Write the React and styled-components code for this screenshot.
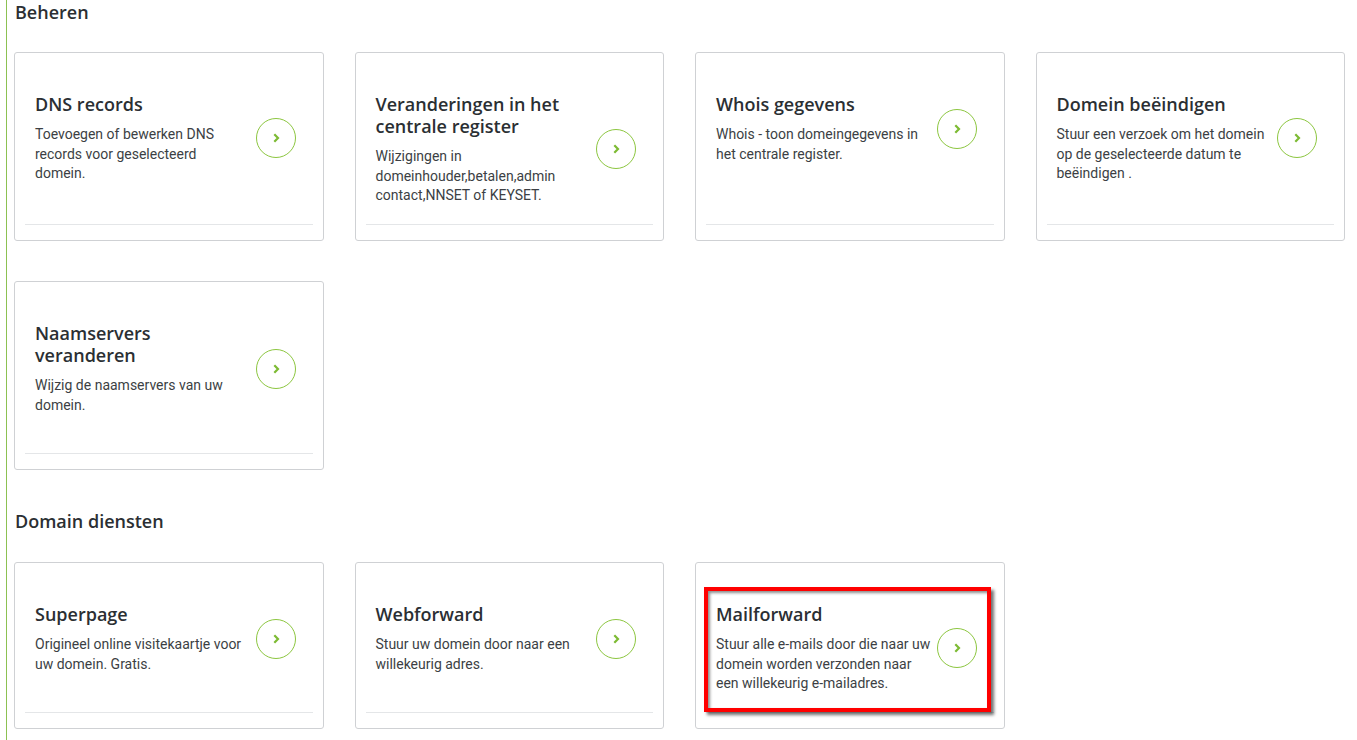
import React from "react";
import styled, { createGlobalStyle } from "styled-components";

const GlobalStyle = createGlobalStyle`
  body {
    margin: 0;
    background: #fff;
    font-family: Roboto, "Liberation Sans", sans-serif;
  }
`;

const Page = styled.div`
  margin-left: 6px;
  border-left: 1px solid #8cc152;
  padding: 0 12px 40px 7px;
  min-height: 740px;
  box-sizing: border-box;
`;

const SectionTitle = styled.h2`
  margin: 0;
  padding-top: ${(p) => p.$top}px;
  height: 24px;
  font-family: "Open Sans", "Noto Sans", sans-serif;
  font-weight: 600;
  font-size: 18px;
  line-height: 24px;
  color: #2b2f33;
  padding-left: 1px;
`;

const Grid = styled.div`
  display: grid;
  grid-template-columns: repeat(4, 1fr);
  column-gap: 31px;
  row-gap: 40px;
  margin-top: ${(p) => p.$top}px;
  grid-auto-rows: ${(p) => p.$rowHeight}px;
`;

const Card = styled.div`
  position: relative;
  border: 1px solid #cfd1d4;
  border-radius: 3px;
  padding: 0 10px 15px;
  display: flex;
  flex-direction: column;
  background: #fff;
`;

const Inner = styled.div`
  flex: 1;
  border-bottom: 1px solid #e4e6e8;
`;

const Row = styled.div`
  display: flex;
  align-items: center;
  gap: 5.5px;
  padding: 40px 17px 0 10px;
`;

const Text = styled.div`
  flex: 1;
  min-width: 0;
`;

const Title = styled.h3`
  margin: 0 0 10px;
  font-family: "Open Sans", "Noto Sans", sans-serif;
  font-weight: 600;
  font-size: 18px;
  line-height: 22px;
  color: #2b2f33;
`;

const Desc = styled.p`
  margin: 0;
  font-size: 14px;
  line-height: 19.5px;
  color: #3c3f44;
`;

const Circle = styled.div`
  flex: none;
  width: 38px;
  height: 38px;
  border: 1.5px solid #8cc63f;
  border-radius: 50%;
  display: flex;
  align-items: center;
  justify-content: center;
  color: #7dbb34;
`;

const Highlight = styled.div`
  position: absolute;
  left: 8px;
  top: 24px;
  width: 287px;
  height: 125px;
  box-sizing: border-box;
  border: 4px solid #ff0000;
  box-shadow: 3px 3px 3px rgba(0, 0, 0, 0.55), inset 2px 2px 3px rgba(0, 0, 0, 0.45);
  pointer-events: none;
`;

function Chevron() {
  return (
    <svg width="12" height="12" viewBox="0 0 12 12">
      <path d="M4.3 2.2 L8 6 L4.3 9.8" fill="none" stroke="currentColor" strokeWidth="2.2" />
    </svg>
  );
}

function Tile({ title, desc, highlight }) {
  return (
    <Card>
      <Inner>
        <Row>
          <Text>
            <Title>{title}</Title>
            <Desc>{desc}</Desc>
          </Text>
          <Circle>
            <Chevron />
          </Circle>
        </Row>
      </Inner>
      {highlight && <Highlight />}
    </Card>
  );
}

const beheren = [
  { title: "DNS records", desc: "Toevoegen of bewerken DNS records voor geselecteerd domein." },
  {
    title: "Veranderingen in het centrale register",
    desc: "Wijzigingen in domeinhouder,betalen,admin contact,NNSET of KEYSET.",
  },
  { title: "Whois gegevens", desc: "Whois - toon domeingegevens in het centrale register." },
  {
    title: "Domein beëindigen",
    desc: "Stuur een verzoek om het domein op de geselecteerde datum te beëindigen .",
  },
  { title: "Naamservers veranderen", desc: "Wijzig de naamservers van uw domein." },
];

const diensten = [
  { title: "Superpage", desc: "Origineel online visitekaartje voor uw domein. Gratis." },
  { title: "Webforward", desc: "Stuur uw domein door naar een willekeurig adres." },
  {
    title: "Mailforward",
    desc: "Stuur alle e-mails door die naar uw domein worden verzonden naar een willekeurig e-mailadres.",
    highlight: true,
  },
];

export default function App() {
  return (
    <>
      <GlobalStyle />
      <Page>
        <SectionTitle $top={0}>Beheren</SectionTitle>
        <Grid $top={28} $rowHeight={189}>
          {beheren.map((t) => (
            <Tile key={t.title} {...t} />
          ))}
        </Grid>
        <SectionTitle $top={39}>Domain diensten</SectionTitle>
        <Grid $top={29} $rowHeight={167}>
          {diensten.map((t) => (
            <Tile key={t.title} {...t} />
          ))}
        </Grid>
      </Page>
    </>
  );
}
